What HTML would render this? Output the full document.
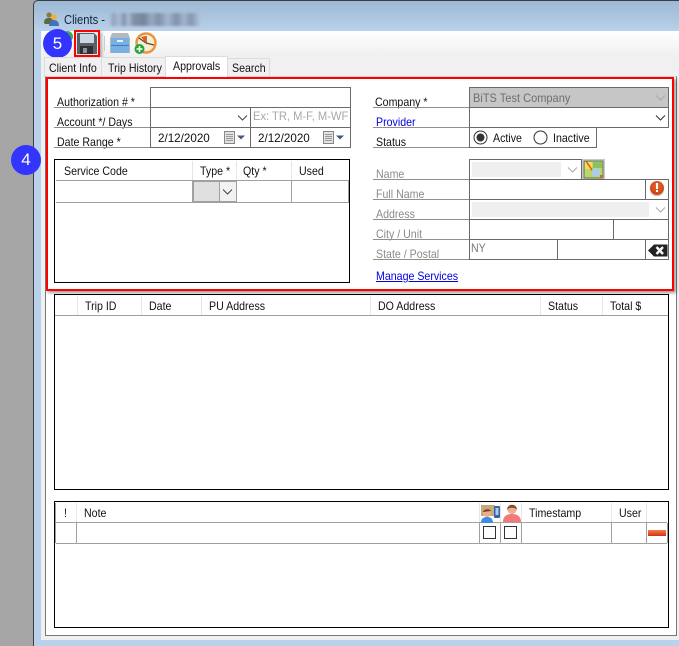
<!DOCTYPE html>
<html><head><meta charset="utf-8">
<style>
html,body{margin:0;padding:0;width:679px;height:646px;overflow:hidden;background:#a6a6a6}
*{box-sizing:border-box}
body{font-family:"Liberation Sans",sans-serif;font-size:12px;color:#111;position:relative}
div,span,svg,a{position:absolute}
.t{white-space:nowrap;line-height:14px;height:14px;transform:scaleX(.885);transform-origin:0 0}
.n{transform:none}
.g{color:#8a8a8a}
.l{height:1px;background:#8f8f8f}
.b{background:#6a6a6a}
.k{background:#000}
.c{background:#a0a0a0}
.h{background:#e6e6e6}
</style></head><body>
<!-- window frame -->
<div style="left:33px;top:0;width:646px;height:646px;background:#3c3c3c;border-top-left-radius:5px"></div>
<div style="left:34px;top:1px;width:645px;height:30px;background:linear-gradient(#9db8d4,#b9d1ea);border-top-left-radius:4px"></div>
<div style="left:34px;top:31px;width:645px;height:615px;background:#b9d1ea"></div>
<div style="left:41px;top:31px;width:638px;height:609px;background:linear-gradient(#fff 0,#f0f0f0 25px,#f0f0f0 100%)"></div>

<!-- title -->
<svg style="left:44px;top:11px" width="16" height="16" viewBox="0 0 16 16"><circle cx="5" cy="4" r="2.6" fill="#8a7a3c"/><path d="M0 12c0-4 2-5 5-5s4 1 4 4v2H1z" fill="#5f6a3a"/><circle cx="10" cy="6" r="2.800" fill="#f0b040"/><path d="M5 15c0-4 2-6 5-6s5 2 5 6z" fill="#3f74b8"/></svg>
<span class="t" style="left:64px;top:13px;font-size:13px;color:#10233f;transform:scaleX(.86)">Clients -</span>
<div style="left:110px;top:13px;width:90px;height:13px;filter:blur(1.2px);background:linear-gradient(90deg,#a9bed6 0,#8fa3bd 4%,#a9bed6 10%,#8392aa 16%,#a9bed6 20%,#8391a7 26%,#75859c 38%,#98aac1 46%,#7e90a8 54%,#a3b7cf 64%,#8091a9 74%,#a1b5cd 82%,#8596ae 90%,#aec4dc 100%)"></div>

<!-- toolbar icons -->
<div style="left:74px;top:30px;width:26px;height:27px;background:#e8e8e8;box-shadow:2px 2px 3px rgba(0,0,0,.3)"></div>
<svg style="left:77px;top:33px" width="20" height="21" viewBox="0 0 20 21"><path d="M0 0h17l3 3v18H0z" fill="#5a5f66"/><rect x="3" y="1" width="14" height="9" fill="#c9d6e4"/><rect x="3" y="13" width="13" height="8" fill="#2c2f33"/><rect x="6" y="15" width="4" height="5" fill="#8d9299"/></svg>
<div style="left:74px;top:30px;width:26px;height:27px;border:2px solid #f00"></div>
<div style="left:104px;top:36px;width:1px;height:15px;background:#c6cdd4"></div>
<svg style="left:110px;top:32px" width="20" height="22" viewBox="0 0 20 22"><path d="M2 1h16l2 5v15H0V6z" fill="#b4b9bd"/><rect x="1" y="6" width="18" height="15" fill="#79b0e4"/><rect x="1" y="13" width="18" height="1" fill="#3b7cc0"/><rect x="7" y="8" width="6" height="2" fill="#e8f2fb"/></svg>
<svg style="left:134px;top:32px" width="23" height="23" viewBox="0 0 23 23"><circle cx="12" cy="11" r="9.500" fill="#f8ecd2" stroke="#e8953a" stroke-width="2.400"/><path d="M12 11L5 6M12 11l8 2M12 4v7" stroke="#5a4a3a" stroke-width="1.300" fill="none"/><path d="M12 11L7 5l5-1z" fill="#e8552a"/><circle cx="5.500" cy="17" r="5" fill="#21a83c"/><path d="M5.500 14v6M2.500 17h6" stroke="#fff" stroke-width="1.600"/></svg>

<!-- numbered badges -->
<div style="left:62px;top:31px;width:11px;height:11px;border-radius:50%;background:#35b04a"></div>
<div style="left:43px;top:29px;width:29px;height:29px;border-radius:50%;background:#3434ff"></div>
<span class="t n" style="left:43px;width:29px;text-align:center;top:35px;color:#fff;font-size:17px;line-height:17px;height:17px">5</span>
<div style="left:11px;top:145px;width:30px;height:30px;border-radius:50%;background:#3434ff"></div>
<span class="t n" style="left:11px;width:30px;text-align:center;top:151px;color:#fff;font-size:17px;line-height:17px;height:17px">4</span>

<!-- tabs -->
<div style="left:44px;top:57px;width:58px;height:20px;background:#f0f0f0;border:1px solid #dcdcdc;border-bottom:0"></div>
<div style="left:101px;top:57px;width:65px;height:20px;background:#f0f0f0;border:1px solid #dcdcdc;border-bottom:0"></div>
<div style="left:227px;top:58px;width:43px;height:19px;background:#f0f0f0;border:1px solid #dcdcdc;border-bottom:0"></div>
<div style="left:45px;top:76px;width:632px;height:560px;background:#fff;border:1px solid #777;border-top-color:#dcdcdc"></div>
<div style="left:165px;top:56px;width:63px;height:22px;background:#fff;border:1px solid #dcdcdc;border-bottom:0"></div>
<span class="t" style="left:49px;top:61px">Client Info</span>
<span class="t" style="left:108px;top:61px">Trip History</span>
<span class="t" style="left:173px;top:59px">Approvals</span>
<span class="t" style="left:232px;top:61px">Search</span>

<!-- red box -->
<div style="left:46px;top:77px;width:628px;height:214px;background:#fff;border:2px solid #f00;box-shadow:2px 2px 3px rgba(0,0,0,.4)"></div>

<!-- left form labels -->
<span class="t" style="left:57px;top:95px">Authorization # *</span><div class="l" style="left:54px;top:107px;width:96px"></div>
<span class="t" style="left:57px;top:115px">Account */ Days</span><div class="l" style="left:54px;top:127px;width:96px"></div>
<span class="t" style="left:57px;top:135px">Date Range *</span><div class="l" style="left:54px;top:147px;width:96px"></div>
<!-- left form box -->
<div style="left:150px;top:87px;width:201px;height:61px;border:1px solid #6a6a6a"></div>
<div class="b" style="left:151px;top:107px;width:199px;height:1px"></div>
<div class="b" style="left:151px;top:127px;width:199px;height:1px"></div>
<div class="b" style="left:250px;top:107px;width:1px;height:41px"></div>
<svg style="left:237px;top:114px" width="11" height="8"><path d="M1 1.500l4.500 4.500L10 1.500" fill="none" stroke="#444" stroke-width="1"/></svg>
<span class="t" style="left:253px;top:109px;color:#a8a8a8;overflow:hidden;width:104px;transform:scaleX(.93)">Ex: TR, M-F, M-WF</span>
<span class="t" style="left:158px;top:131px;transform:scaleX(.97)">2/12/2020</span>
<span class="t" style="left:258px;top:131px;transform:scaleX(.97)">2/12/2020</span>
<svg style="left:224px;top:131px" width="22" height="13"><rect x="0.500" y="0.500" width="10" height="12" fill="#e2e2e2" stroke="#888"/><path d="M2 3.500h7M2 5.500h7M2 7.500h7M2 9.500h7" stroke="#9a9a9a"/><path d="M13 4.500h8l-4 4z" fill="#45597a"/></svg>
<svg style="left:323px;top:131px" width="22" height="13"><rect x="0.500" y="0.500" width="10" height="12" fill="#e2e2e2" stroke="#888"/><path d="M2 3.500h7M2 5.500h7M2 7.500h7M2 9.500h7" stroke="#9a9a9a"/><path d="M13 4.500h8l-4 4z" fill="#45597a"/></svg>

<!-- service grid -->
<div style="left:54px;top:159px;width:296px;height:124px;border:1px solid #000"></div>
<div class="h" style="left:192px;top:161px;width:1px;height:19px"></div>
<div class="h" style="left:236px;top:161px;width:1px;height:19px"></div>
<div class="h" style="left:291px;top:161px;width:1px;height:19px"></div>
<div class="c" style="left:56px;top:180px;width:293px;height:1px"></div>
<div class="c" style="left:56px;top:202px;width:293px;height:1px"></div>
<div class="c" style="left:291px;top:181px;width:1px;height:21px"></div>
<div class="c" style="left:348px;top:181px;width:1px;height:21px"></div>
<div style="left:192px;top:180px;width:45px;height:23px;background:#e0e0e0;border:2px solid #a0a0a0"></div>
<div style="left:219px;top:182px;width:17px;height:19px;background:#f2f2f2;border-left:1px solid #a0a0a0"></div>
<svg style="left:222px;top:188px" width="11" height="8"><path d="M1 1.500l4.500 4.500L10 1.500" fill="none" stroke="#444"/></svg>
<span class="t" style="left:64px;top:164px">Service Code</span>
<span class="t" style="left:200px;top:164px">Type *</span>
<span class="t" style="left:243px;top:164px">Qty *</span>
<span class="t" style="left:299px;top:164px">Used</span>

<!-- right form labels -->
<span class="t" style="left:375px;top:95px">Company *</span><div class="l" style="left:373px;top:107px;width:96px"></div>
<span class="t" style="left:376px;top:115px;color:#0000e0">Provider</span><div class="l" style="left:373px;top:127px;width:96px"></div>
<span class="t" style="left:376px;top:135px">Status</span><div class="l" style="left:373px;top:147px;width:96px"></div>
<span class="t g" style="left:376px;top:167px">Name</span><div class="l" style="left:373px;top:179px;width:96px"></div>
<span class="t g" style="left:376px;top:187px">Full Name</span><div class="l" style="left:373px;top:199px;width:96px"></div>
<span class="t g" style="left:376px;top:207px">Address</span><div class="l" style="left:373px;top:219px;width:96px"></div>
<span class="t g" style="left:376px;top:227px">City / Unit</span><div class="l" style="left:373px;top:239px;width:96px"></div>
<span class="t g" style="left:376px;top:247px">State / Postal</span><div class="l" style="left:373px;top:259px;width:96px"></div>

<!-- company / provider / status -->
<div style="left:469px;top:87px;width:200px;height:21px;background:#c6c6c6;border:1px solid #6a6a6a"></div>
<span class="t" style="left:473px;top:91px;color:#6e6e6e;transform:scaleX(.92)">BiTS Test Company</span>
<svg style="left:655px;top:94px" width="11" height="8"><path d="M1 1.500l4.500 4.500L10 1.500" fill="none" stroke="#a8a8a8"/></svg>
<div style="left:469px;top:107px;width:200px;height:21px;border:1px solid #6a6a6a"></div>
<svg style="left:655px;top:114px" width="11" height="8"><path d="M1 1.500l4.500 4.500L10 1.500" fill="none" stroke="#333"/></svg>
<div style="left:469px;top:127px;width:128px;height:21px;border:1px solid #6a6a6a"></div>
<svg style="left:473px;top:130px" width="15" height="15"><circle cx="7.500" cy="7.500" r="6.500" fill="#fff" stroke="#333"/><circle cx="7.500" cy="7.500" r="4" fill="#333"/></svg>
<span class="t" style="left:493px;top:131px">Active</span>
<svg style="left:533px;top:130px" width="15" height="15"><circle cx="7.500" cy="7.500" r="6.500" fill="#fff" stroke="#333"/></svg>
<span class="t" style="left:553px;top:131px">Inactive</span>

<!-- address block -->
<div style="left:469px;top:159px;width:113px;height:21px;border:1px solid #6a6a6a"></div>
<div style="left:472px;top:162px;width:89px;height:15px;background:#efefef"></div>
<svg style="left:567px;top:166px" width="11" height="8"><path d="M1 1.500l4.500 4.500L10 1.500" fill="none" stroke="#a8a8a8"/></svg>
<svg style="left:582px;top:159px" width="23" height="21" viewBox="0 0 23 21"><rect x="0.500" y="0.500" width="22" height="20" fill="#dedede" stroke="#c8c8c8"/><rect x="2" y="2" width="19" height="17" fill="#b8d86a" stroke="#5b6b5b"/><path d="M3 3h7v7H3z" fill="#f2e04c"/><path d="M11 3h9v6h-9z" fill="#8fc060"/><path d="M4 2l8 12" stroke="#e8503c" stroke-width="1.500"/><rect x="10" y="10" width="8" height="7" rx="2" fill="#a9cdea"/><rect x="18" y="16" width="3" height="3" fill="#c0703c"/></svg>
<div style="left:469px;top:179px;width:200px;height:21px;border:1px solid #6a6a6a"></div>
<div class="b" style="left:645px;top:180px;width:1px;height:19px"></div>
<div style="left:650px;top:181px;width:14px;height:14px;border-radius:50%;background:radial-gradient(circle at 50% 35%,#e8642c,#c23c10);box-shadow:0 1px 1px rgba(0,0,0,.3)"></div>
<div style="left:656px;top:183px;width:2px;height:6px;background:#fff"></div>
<div style="left:656px;top:190px;width:2px;height:2px;background:#fff"></div>
<div style="left:469px;top:199px;width:200px;height:21px;border:1px solid #6a6a6a"></div>
<div style="left:472px;top:202px;width:177px;height:15px;background:#efefef"></div>
<svg style="left:655px;top:206px" width="11" height="8"><path d="M1 1.500l4.500 4.500L10 1.500" fill="none" stroke="#a8a8a8"/></svg>
<div style="left:469px;top:219px;width:200px;height:21px;border:1px solid #6a6a6a"></div>
<div class="b" style="left:613px;top:220px;width:1px;height:19px"></div>
<div style="left:469px;top:239px;width:200px;height:21px;border:1px solid #6a6a6a"></div>
<div class="b" style="left:557px;top:240px;width:1px;height:19px"></div>
<div class="b" style="left:645px;top:240px;width:1px;height:19px"></div>
<span class="t" style="left:471px;top:241px;color:#7a7a7a">NY</span>
<svg style="left:648px;top:244px" width="20" height="13" viewBox="0 0 20 13"><path d="M0 6.500L6 0.500h13.500v12H6z" fill="#222"/><path d="M8.500 3l6.500 7M15 3l-6.500 7" stroke="#f4f4f4" stroke-width="2.500" fill="none"/></svg>
<a class="t" style="left:376px;top:269px;color:#0000e0;text-decoration:underline">Manage Services</a>

<!-- trip grid -->
<div style="left:54px;top:294px;width:615px;height:196px;border:1px solid #000"></div>
<div class="h" style="left:77px;top:296px;width:1px;height:19px"></div>
<div class="h" style="left:141px;top:296px;width:1px;height:19px"></div>
<div class="h" style="left:201px;top:296px;width:1px;height:19px"></div>
<div class="h" style="left:370px;top:296px;width:1px;height:19px"></div>
<div class="h" style="left:540px;top:296px;width:1px;height:19px"></div>
<div class="h" style="left:602px;top:296px;width:1px;height:19px"></div>
<div class="c" style="left:55px;top:315px;width:613px;height:1px"></div>
<span class="t" style="left:85px;top:299px">Trip ID</span>
<span class="t" style="left:149px;top:299px">Date</span>
<span class="t" style="left:209px;top:299px">PU Address</span>
<span class="t" style="left:378px;top:299px">DO Address</span>
<span class="t" style="left:548px;top:299px">Status</span>
<span class="t" style="left:610px;top:299px">Total $</span>

<!-- note grid -->
<div style="left:54px;top:501px;width:615px;height:127px;border:1px solid #000"></div>
<div class="h" style="left:76px;top:503px;width:1px;height:19px"></div>
<div class="h" style="left:479px;top:503px;width:1px;height:19px"></div>
<div class="h" style="left:500px;top:503px;width:1px;height:19px"></div>
<div class="h" style="left:521px;top:503px;width:1px;height:19px"></div>
<div class="h" style="left:611px;top:503px;width:1px;height:19px"></div>
<div class="h" style="left:646px;top:503px;width:1px;height:19px"></div>
<div class="c" style="left:56px;top:522px;width:611px;height:1px"></div>
<div class="c" style="left:56px;top:543px;width:611px;height:1px"></div>
<div class="c" style="left:76px;top:523px;width:1px;height:20px"></div>
<div class="c" style="left:479px;top:523px;width:1px;height:20px"></div>
<div class="c" style="left:500px;top:523px;width:1px;height:20px"></div>
<div class="c" style="left:521px;top:523px;width:1px;height:20px"></div>
<div class="c" style="left:611px;top:523px;width:1px;height:20px"></div>
<div class="c" style="left:646px;top:523px;width:1px;height:20px"></div>
<div class="c" style="left:667px;top:523px;width:1px;height:20px"></div>
<div class="c" style="left:55px;top:503px;width:1px;height:40px"></div>
<span class="t" style="left:64px;top:506px">!</span>
<span class="t" style="left:84px;top:506px">Note</span>
<span class="t" style="left:529px;top:506px">Timestamp</span>
<span class="t" style="left:619px;top:506px">User</span>
<svg style="left:481px;top:504px" width="20" height="19" viewBox="0 0 20 19"><rect x="0" y="1" width="14" height="11" fill="#c8a880"/><rect x="13" y="2" width="6" height="12" rx="1" fill="#3a62a8"/><rect x="14.500" y="4" width="3" height="7" fill="#a8cdf0"/><circle cx="6" cy="9" r="4" fill="#e8b088"/><path d="M2 8c0-3 7-4 8-1z" fill="#7a4020"/><path d="M0 19c0-5 3-6 6-6s6 1 6 6z" fill="#3d8ee0"/></svg>
<svg style="left:503px;top:504px" width="18" height="19" viewBox="0 0 18 19"><circle cx="9" cy="5.500" r="4.500" fill="#e8b090"/><path d="M4 6c0-7 10-7 10 0-2-3-8-3-10 0z" fill="#8a4a28"/><path d="M0 18c0-6 4-8 9-8s9 2 9 8z" fill="#f27a78"/></svg>
<div style="left:483px;top:526px;width:13px;height:13px;border:1px solid #333;background:#fff"></div>
<div style="left:504px;top:526px;width:13px;height:13px;border:1px solid #333;background:#fff"></div>
<div style="left:648px;top:530px;width:18px;height:6px;background:linear-gradient(#f08040,#d8301c)"></div>
</body></html>
